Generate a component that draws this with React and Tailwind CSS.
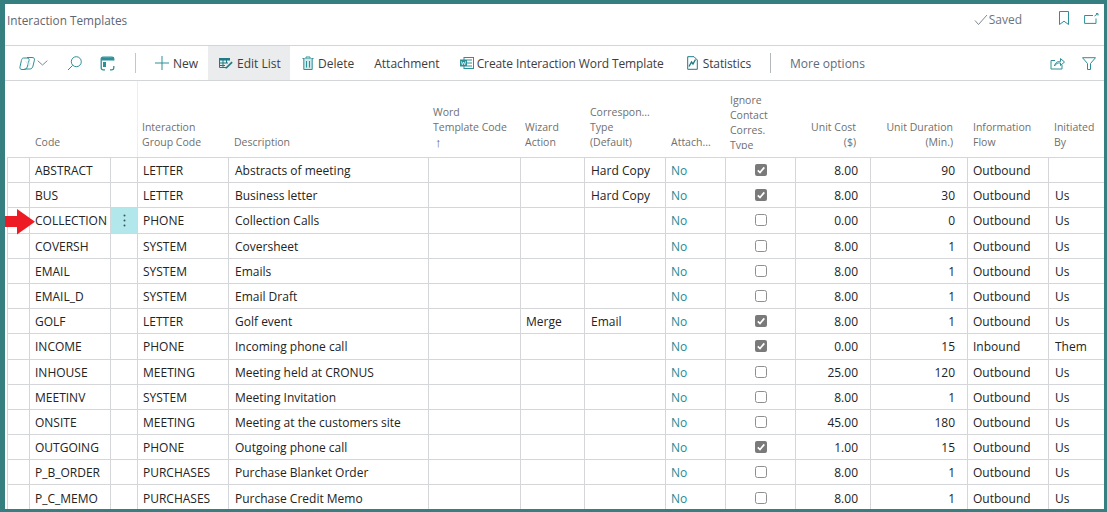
import React from "react";

const font = { fontFamily: '"Open Sans", "Noto Sans", sans-serif' };
const cols = "grid grid-cols-[23px_81px_27px_91px_200px_92px_64px_81px_60px_70px_75px_97px_81px_55px]";

const rows = [
  ["ABSTRACT","LETTER","Abstracts of meeting","","","Hard Copy",true,"8.00","90","Outbound",""],
  ["BUS","LETTER","Business letter","","","Hard Copy",true,"8.00","30","Outbound","Us"],
  ["COLLECTION","PHONE","Collection Calls","","","",false,"0.00","0","Outbound","Us"],
  ["COVERSH","SYSTEM","Coversheet","","","",false,"8.00","1","Outbound","Us"],
  ["EMAIL","SYSTEM","Emails","","","",false,"8.00","1","Outbound","Us"],
  ["EMAIL_D","SYSTEM","Email Draft","","","",false,"8.00","1","Outbound","Us"],
  ["GOLF","LETTER","Golf event","","Merge","Email",true,"8.00","1","Outbound","Us"],
  ["INCOME","PHONE","Incoming phone call","","","",true,"0.00","15","Inbound","Them"],
  ["INHOUSE","MEETING","Meeting held at CRONUS","","","",false,"25.00","120","Outbound","Us"],
  ["MEETINV","SYSTEM","Meeting Invitation","","","",false,"8.00","1","Outbound","Us"],
  ["ONSITE","MEETING","Meeting at the customers site","","","",false,"45.00","180","Outbound","Us"],
  ["OUTGOING","PHONE","Outgoing phone call","","","",true,"1.00","15","Outbound","Us"],
  ["P_B_ORDER","PURCHASES","Purchase Blanket Order","","","",false,"8.00","1","Outbound","Us"],
  ["P_C_MEMO","PURCHASES","Purchase Credit Memo","","","",false,"8.00","1","Outbound","Us"],
];

const T = "#2d8f97";

function Icon({ w = 18, h = 18, vb = "0 0 18 18", children, color = T, sw = 1 }) {
  return (
    <svg width={w} height={h} viewBox={vb} fill="none" stroke={color} strokeWidth={sw} className="shrink-0">
      {children}
    </svg>
  );
}

function Btn({ icon, label, className = "", textClass = "" }) {
  return (
    <div className={`flex h-full items-center whitespace-nowrap ${className}`}>
      {icon}
      <span className={`pt-[2px] ${textClass}`}>{label}</span>
    </div>
  );
}

function HeaderCell({ lines, right, pl = "pl-[5px]", top }) {
  return (
    <div className={`flex flex-col overflow-hidden text-[10.5px] leading-[15px] text-[#6f6f6f] ${top ? "h-[68px] justify-start pt-[12px]" : "h-full justify-end pb-[7px]"} ${right ? "items-end pr-[15px] text-right" : pl}`}>
      {lines.map((l, i) => <div key={i} className={`whitespace-nowrap ${l === "↑" ? "pl-[2px] text-[13px] font-bold text-[#666666]" : ""}`}>{l}</div>)}
    </div>
  );
}

function Cell({ children, right, center, pl = "pl-[5px]", className = "" }) {
  const pad = right ? "justify-end pr-[12px]" : center ? "justify-center" : pl;
  return (
    <div className={`flex items-center overflow-hidden whitespace-nowrap border-r border-b border-[#d5d6da] ${center ? "" : "pt-[2px]"} ${pad} ${className}`}>
      {children}
    </div>
  );
}

function Check({ on }) {
  return on ? (
    <svg width="12" height="12" viewBox="0 0 12 12">
      <rect x="0" y="0" width="12" height="12" rx="2" fill="#7a7a7a" />
      <path d="M2.8 6.4 L5 8.6 L9.3 3.4" fill="none" stroke="#fff" strokeWidth="1.7" />
    </svg>
  ) : (
    <svg width="12" height="12" viewBox="0 0 12 12">
      <rect x="0.5" y="0.5" width="11" height="11" rx="2" fill="#fff" stroke="#8f8f8f" />
    </svg>
  );
}

export default function App() {
  return (
    <div style={font} className="relative h-[512px] w-[1107px] overflow-hidden border-t-4 border-r-[3px] border-b-[3px] border-l-[5px] border-[#357f80] bg-white text-[12px]">
      {/* title bar */}
      <div className="flex h-[41px] items-center justify-between pl-[2px] pb-[9px]">
        <span className="pt-[2px] text-[11.8px] text-[#5f6672]">Interaction Templates</span>
        <div className="flex items-center">
          <svg width="14" height="12" viewBox="0 0 14 12" fill="none" stroke="#6f7a80" strokeWidth="0.9"><path d="M1 6.5 L4.5 10.5 L13 1" /></svg>
          <span className="ml-[1px] text-[#6f747a]">Saved</span>
          <div className="mb-[4px] ml-[37px]">
            <Icon w={10} h={14} vb="0 0 10 14" sw={1}><path d="M.5 .5 H9.5 V13.5 L5 10.2 L.5 13.5 Z" /></Icon>
          </div>
          <div className="mb-[4px] ml-[15px] mr-[5px]">
            <Icon w={15} h={11} vb="0 0 15 11"><path d="M9 2.5 H.6 V10.4 H12 V5.5" /><path d="M10.5 3 L13.5 1" /><path d="M12 .6 H14 V2.5" /></Icon>
          </div>
        </div>
      </div>

      {/* toolbar */}
      <div className="flex h-[36px] items-stretch border-y border-[#d4d5d8] pl-[14px] text-[12px] text-[#3d3d3d]">
        <div className="flex items-center">
          <Icon w={17} h={15} vb="0 0 17 15">
            <path d="M4.5 2 H8 C9.8 2 10.4 3 10 4.6 L8.2 11 C7.7 12.8 6.6 13.5 5 13.5 H3 C1.3 13.5 .6 12.4 1 10.8 L2.4 4.5 C2.8 2.8 3.4 2 4.5 2 Z" />
            <path d="M8 1.5 H13 C15 1.5 15.8 2.6 15.4 4.2 L14 10 C13.5 12 12.4 13 10.8 13 H5.5" />
            <path d="M6 5 L12 7 L10 11" fill="#bfe3e6" fillOpacity=".6" stroke="none" />
          </Icon>
          <svg width="11" height="6" viewBox="0 0 11 6" fill="none" stroke="#7b8a90" className="ml-[1px]"><path d="M.7 .7 L5.5 5 L10.3 .7" /></svg>
          <div className="ml-[19px]"><Icon w={15} h={15} vb="0 0 15 15"><circle cx="9.3" cy="5.7" r="5" /><path d="M5.6 9.4 L1 14" /></Icon></div>
          <div className="ml-[18px]">
            <Icon w={15} h={15} vb="0 0 15 15" sw={1.3}>
              <path d="M3 1.2 H12 C13 1.2 13.8 2 13.8 3 V4.5 M13.8 10 V12 C13.8 13 13 13.8 12 13.8 H10 M5 13.8 H3 C2 13.8 1.2 13 1.2 12 V3 C1.2 2 2 1.2 3 1.2" />
              <rect x="1.5" y="1.5" width="12" height="3" fill={T} stroke="none" />
              <rect x="3" y="6" width="3" height="5" fill={T} stroke="none" />
            </Icon>
          </div>
        </div>
        <div className="ml-[20px] mr-[9px] my-[7px] w-px bg-[#c4c6ca]" />
        <Btn label="New" className="w-[63px] gap-[4px] pl-[10px]" icon={<Icon w={14} h={14} vb="0 0 14 14"><path d="M7 0 V14 M0 7 H14" /></Icon>} />
        <Btn label="Edit List" className="w-[82px] gap-[4px] bg-[#ebecee] pl-[11px]" icon={
          <svg width="14" height="12" viewBox="0 0 14 12" className="shrink-0">
            <rect x="0" y="1" width="11" height="2.5" fill="#1f7a85" />
            <path d="M.5 1 V10.5 H8 M4 3 V10.5 M7.5 3 V6 M.5 6 H9 M.5 8.5 H6" stroke="#1f7a85" fill="none" />
            <path d="M6.5 10.5 L12.5 4.5 L13.7 5.7 L7.8 11.5 H6.5 Z" fill="#1f7a85" />
          </svg>
        } />
        <Btn label="Delete" className="gap-[4px] pl-[12px]" icon={
          <Icon w={12} h={14} vb="0 0 12 14"><path d="M.5 2.5 H11.5 M4 2.5 V1 H8 V2.5" /><path d="M1.8 2.5 V13.5 H10.2 V2.5" fill="#cfe8ea" /><path d="M4.5 5 V11.5 M7.5 5 V11.5" /></Icon>
        } />
        <Btn label="Attachment" className="pl-[20px]" />
        <Btn label="Create Interaction Word Template" className="gap-[3px] pl-[20px]" textClass="tracking-[-0.1px]" icon={
          <svg width="14" height="12" viewBox="0 0 14 12" fill="none" className="shrink-0">
            <rect x="4" y=".5" width="9.5" height="11" stroke={T} />
            <path d="M7 3 H12 M7 6 H12 M7 9 H12" stroke={T} />
            <rect x="0" y="2.5" width="7" height="7" fill={T} />
            <path d="M1.3 4.3 L2.3 7.8 L3.5 5 L4.7 7.8 L5.7 4.3" stroke="#fff" strokeWidth=".7" />
          </svg>
        } />
        <Btn label="Statistics" className="gap-[5px] pl-[23px]" textClass="tracking-[-0.1px]" icon={
          <svg width="11" height="14" viewBox="0 0 11 14" fill="none" stroke="#1f7a85" className="shrink-0">
            <path d="M.7 .7 H7 L10.3 4 V13.3 H.7 Z" />
            <path d="M2 10.5 L4.5 6 L6 8 L8.5 3.5" strokeWidth="1.4" />
          </svg>
        } />
        <div className="ml-[19px] mr-[19px] my-[7px] w-px bg-[#b4b7bb]" />
        <Btn label="More options" textClass="text-[#5f6b7a]" />
        <div className="ml-auto flex items-center gap-[17px] pr-[8px]">
          <Icon w={15} h={13} vb="0 0 15 13"><path d="M5 3.5 H1 V12 H12 V8" /><path d="M4.5 9 C5 5.5 8 4 10.5 4.5 V1.5 L14.5 5 L10.5 8.5 V6 C8 5.5 6 6.5 4.5 9 Z" /></Icon>
          <Icon w={14} h={13} vb="0 0 14 13"><path d="M.5 .7 H13.5 L8.5 6.5 V12.5 H5.5 V6.5 Z" /></Icon>
        </div>
      </div>

      {/* table header */}
      <div className={`${cols} ml-[2px] h-[76px]`}>
        <div />
        <HeaderCell lines={["Code"]} />
        <div className="border-r border-[#eeeeee]" />
        <HeaderCell lines={["Interaction", "Group Code"]} pl="pl-[4px]" />
        <HeaderCell lines={["Description"]} />
        <HeaderCell lines={["Word", "Template Code", "↑"]} pl="pl-[4px]" />
        <HeaderCell lines={["Wizard", "Action"]} pl="pl-[4px]" />
        <HeaderCell lines={["Correspon...", "Type", "(Default)"]} />
        <HeaderCell lines={["Attach..."]} />
        <HeaderCell lines={["Ignore", "Contact", "Corres.", "Type"]} top pl="pl-[4px]" />
        <HeaderCell lines={["Unit Cost", "($)"]} right />
        <HeaderCell lines={["Unit Duration", "(Min.)"]} right />
        <HeaderCell lines={["Information", "Flow"]} />
        <HeaderCell lines={["Initiated", "By"]} />
      </div>

      {/* table body */}
      <div className="ml-[2px] border-t border-[#d5d6da] text-[#232323]">
        {rows.map((r, i) => (
          <div key={r[0]} className={`${cols} h-[25.2px]`}>
            <Cell className="border-l border-l-[#d5d6da]" />
            <Cell>{r[0]}</Cell>
            <Cell center className={i === 2 ? "bg-[#b2e8ec]" : ""}>
              {i === 2 && (
                <svg width="3" height="13" viewBox="0 0 3 13" fill="#3a5558"><circle cx="1.5" cy="1.5" r="1" /><circle cx="1.5" cy="6.5" r="1" /><circle cx="1.5" cy="11.5" r="1" /></svg>
              )}
            </Cell>
            <Cell>{r[1]}</Cell>
            <Cell pl="pl-[6px]">{r[2]}</Cell>
            <Cell>{r[3]}</Cell>
            <Cell>{r[4]}</Cell>
            <Cell pl="pl-[6px]">{r[5]}</Cell>
            <Cell className="text-[#1f8a94]">No</Cell>
            <Cell center><Check on={r[6]} /></Cell>
            <Cell right>{r[7]}</Cell>
            <Cell right>{r[8]}</Cell>
            <Cell>{r[9]}</Cell>
            <Cell pl="pl-[6px]" className="border-r-0">{r[10]}</Cell>
          </div>
        ))}
      </div>

      {/* red arrow annotation */}
      <svg className="absolute left-[-2px] top-[205px]" width="33" height="26" viewBox="0 0 33 26">
        <path d="M1 7 H14 V0 L32 12.7 L14 25.5 V18 H1 Z" fill="#ed1c24" />
      </svg>
    </div>
  );
}
